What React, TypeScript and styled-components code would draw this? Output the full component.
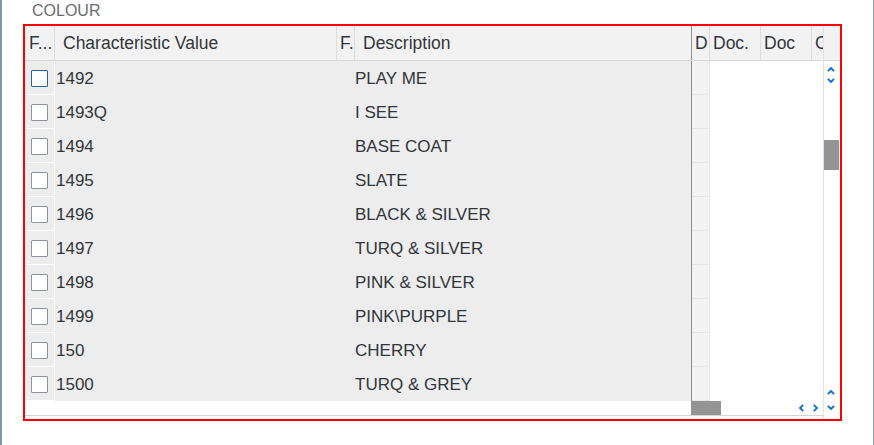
import React from "react";
import styled, { createGlobalStyle } from "styled-components";

const Global = createGlobalStyle`
  html, body { margin: 0; padding: 0; background: #ffffff; }
  body { font-family: "Liberation Sans", Arial, sans-serif; }
`;

const COLS = "30px 282px 18px 337px 18px 51px 51px 11px";

const Page = styled.div`
  width: 874px;
  height: 445px;
  box-sizing: border-box;
  border-left: 2px solid #7d97b5;
  border-right: 1px solid #8a9cb1;
  background: #ffffff;
  overflow: hidden;
`;

const Label = styled.div`
  height: 24px;
  line-height: 22px;
  padding-left: 30px;
  font-size: 16px;
  color: #6a6d70;
`;

const Frame = styled.div`
  margin-left: 21px;
  width: 819px;
  height: 397px;
  box-sizing: border-box;
  border: 2px solid #ff0000;
  display: flex;
`;

const Main = styled.div`
  width: 798px;
  display: flex;
  flex-direction: column;
`;

const HeaderRow = styled.div`
  display: grid;
  grid-template-columns: ${COLS};
  height: 35px;
  box-sizing: border-box;
  background: #f2f2f2;
  border-bottom: 1px solid #d9d9d9;
`;

type Divider = "light" | "dark" | "none";

const HeaderCell = styled.div<{ $pad: number; $divider?: Divider }>`
  padding-left: ${(p) => p.$pad}px;
  padding-top: 1px;
  box-sizing: border-box;
  overflow: hidden;
  white-space: nowrap;
  font-size: 17.5px;
  line-height: 33px;
  color: #32363a;
  border-right: ${(p) =>
    p.$divider === "none"
      ? "none"
      : `1px solid ${p.$divider === "dark" ? "#8e8e8e" : "#dcdcdc"}`};
`;

const Body = styled.div`
  display: flex;
  flex-direction: column;
`;

const Row = styled.div`
  display: grid;
  grid-template-columns: ${COLS};
  height: 34px;
`;

const CheckCell = styled.div`
  background: #ededed;
  box-sizing: border-box;
  border-right: 1px solid #ffffff;
  border-bottom: 1px solid #ffffff;
  display: flex;
  align-items: center;
  padding-left: 6px;
`;

const Checkbox = styled.span<{ $focused?: boolean }>`
  display: block;
  width: 17px;
  height: 17px;
  box-sizing: border-box;
  background: #ffffff;
  border: 1px solid ${(p) => (p.$focused ? "#2f5f93" : "#8d949b")};
  border-radius: 1px;
  margin-top: 1px;
`;

const TextCell = styled.div<{ $divider?: boolean }>`
  background: #ededed;
  box-sizing: border-box;
  padding-left: 1px;
  padding-top: 2px;
  font-size: 17px;
  line-height: 32px;
  color: #32363a;
  white-space: nowrap;
  overflow: hidden;
  border-right: ${(p) => (p.$divider ? "1px solid #8e8e8e" : "none")};
`;

const DescCell = styled(TextCell)`
  padding-left: 0;
`;

const SideCell = styled.div`
  background: #f2f2f2;
  box-sizing: border-box;
  border-bottom: 1px solid #e6e6e6;
  border-right: 1px solid #e9e9e9;
`;

const WhiteCell = styled.div`
  background: #ffffff;
`;

const HScroll = styled.div`
  height: 15px;
  box-sizing: border-box;
  border-bottom: 1px solid #d4d4d4;
  display: flex;
  align-items: stretch;
`;

const FrozenGap = styled.div`
  width: 666px;
`;

const Thumb = styled.div<{ $w: number; $h: number }>`
  width: ${(p) => p.$w}px;
  height: ${(p) => p.$h}px;
  background: #949494;
  flex: none;
`;

const Spacer = styled.div`
  flex: 1;
`;

const HArrows = styled.div`
  display: flex;
  gap: 9px;
  padding-top: 3px;
  padding-right: 5px;
`;

const BottomGap = styled.div`
  flex: 1;
`;

const VScroll = styled.div`
  width: 17px;
  box-sizing: border-box;
  border-left: 1px solid #e3e3e3;
  display: flex;
  flex-direction: column;
`;

const VHead = styled.div`
  height: 35px;
  box-sizing: border-box;
  background: #f2f2f2;
  border-bottom: 1px solid #d9d9d9;
`;

const Track = styled.div`
  flex: 1;
  display: flex;
  flex-direction: column;
  align-items: flex-start;
`;

const ArrowSlot = styled.div<{ $top: number; $left?: number }>`
  margin-top: ${(p) => p.$top}px;
  padding-left: ${(p) => p.$left ?? 3}px;
  display: flex;
  line-height: 0;
`;

const VThumbSlot = styled.div`
  margin-top: 57px;
`;

const BLUE = "#0a6ed1";

function Chevron({ dir }: { dir: "up" | "down" | "left" | "right" }) {
  if (dir === "up" || dir === "down") {
    const pts = dir === "up" ? "0.9,4.2 4,1 7.1,4.2" : "0.9,0.8 4,4 7.1,0.8";
    return (
      <svg width="8" height="5" viewBox="0 0 8 5">
        <polyline points={pts} fill="none" stroke={BLUE} strokeWidth="1.8" />
      </svg>
    );
  }
  const pts = dir === "left" ? "4.2,0.9 1,4 4.2,7.1" : "0.8,0.9 4,4 0.8,7.1";
  return (
    <svg width="5" height="8" viewBox="0 0 5 8">
      <polyline points={pts} fill="none" stroke={BLUE} strokeWidth="1.8" />
    </svg>
  );
}

const rows: [string, string][] = [
  ["1492", "PLAY ME"],
  ["1493Q", "I SEE"],
  ["1494", "BASE COAT"],
  ["1495", "SLATE"],
  ["1496", "BLACK & SILVER"],
  ["1497", "TURQ & SILVER"],
  ["1498", "PINK & SILVER"],
  ["1499", "PINK\\PURPLE"],
  ["150", "CHERRY"],
  ["1500", "TURQ & GREY"],
];

export default function App() {
  return (
    <>
      <Global />
      <Page>
        <Label>COLOUR</Label>
        <Frame>
          <Main>
            <HeaderRow>
              <HeaderCell $pad={4}>F...</HeaderCell>
              <HeaderCell $pad={8}>Characteristic Value</HeaderCell>
              <HeaderCell $pad={3}>F.</HeaderCell>
              <HeaderCell $pad={8} $divider="dark">
                Description
              </HeaderCell>
              <HeaderCell $pad={3}>D</HeaderCell>
              <HeaderCell $pad={3}>Doc.</HeaderCell>
              <HeaderCell $pad={3}>Doc</HeaderCell>
              <HeaderCell $pad={3} $divider="none">
                C
              </HeaderCell>
            </HeaderRow>
            <Body>
              {rows.map(([value, desc], i) => (
                <Row key={value}>
                  <CheckCell>
                    <Checkbox $focused={i === 0} />
                  </CheckCell>
                  <TextCell>{value}</TextCell>
                  <TextCell />
                  <DescCell $divider>{desc}</DescCell>
                  <SideCell />
                  <WhiteCell />
                  <WhiteCell />
                  <WhiteCell />
                </Row>
              ))}
            </Body>
            <HScroll>
              <FrozenGap />
              <Thumb $w={30} $h={14} />
              <Spacer />
              <HArrows>
                <Chevron dir="left" />
                <Chevron dir="right" />
              </HArrows>
            </HScroll>
            <BottomGap />
          </Main>
          <VScroll>
            <VHead />
            <Track>
              <ArrowSlot $top={6}>
                <Chevron dir="up" />
              </ArrowSlot>
              <ArrowSlot $top={6}>
                <Chevron dir="down" />
              </ArrowSlot>
              <VThumbSlot>
                <Thumb $w={15} $h={30} />
              </VThumbSlot>
              <Spacer />
              <ArrowSlot $top={0}>
                <Chevron dir="up" />
              </ArrowSlot>
              <ArrowSlot $top={10}>
                <Chevron dir="down" />
              </ArrowSlot>
              <ArrowSlot $top={9} />
            </Track>
          </VScroll>
        </Frame>
      </Page>
    </>
  );
}
